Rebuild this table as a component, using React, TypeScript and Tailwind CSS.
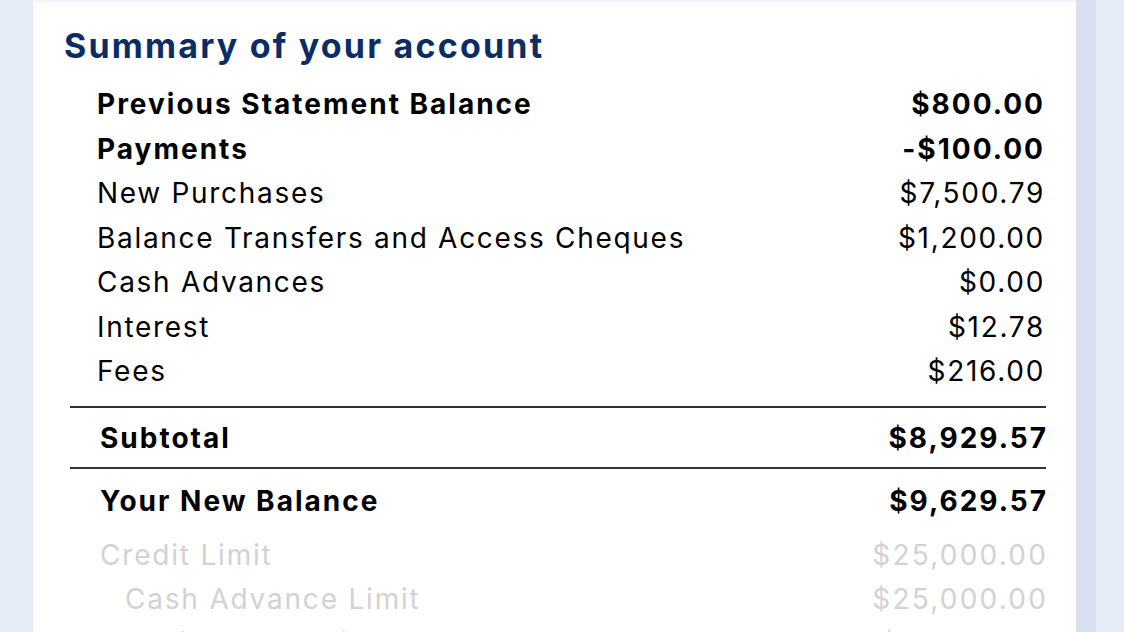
const rows = [
  { label: "Previous Statement Balance", value: "$800.00", bold: true },
  { label: "Payments", value: "-$100.00", bold: true },
  { label: "New Purchases", value: "$7,500.79" },
  { label: "Balance Transfers and Access Cheques", value: "$1,200.00" },
  { label: "Cash Advances", value: "$0.00" },
  { label: "Interest", value: "$12.78" },
  { label: "Fees", value: "$216.00" },
];

export default function App() {
  return (
    <div className="flex h-[632px] w-[1124px] overflow-hidden bg-white font-['Inter',sans-serif]">
      <div className="w-[33px] shrink-0 bg-[#e5ebf7]" />
      <main className="w-[1043px] shrink-0 border-t-2 border-[#f2f3f8] bg-white">
        <h1 className="pl-[31px] pt-[23px] text-[34px] font-bold leading-[41px] tracking-[2.2px] text-[#0a2d66]">
          Summary of your account
        </h1>

        <div className="mt-[16px] pl-[64px] pr-[33px] text-[28px] text-black">
          {rows.map((r) => (
            <div
              key={r.label}
              className={`flex h-[44.5px] items-center justify-between ${
                r.bold ? "font-bold tracking-[2px]" : "font-normal tracking-[1.7px]"
              }`}
            >
              <span>{r.label}</span>
              <span className="-mr-[2px]">{r.value}</span>
            </div>
          ))}
        </div>

        <div className="ml-[37px] mr-[30px] mt-[12.5px] border-t-2 border-[#333]">
          <div className="flex h-[59px] items-center justify-between pl-[30px] text-[28px] font-bold tracking-[2px] text-black">
            <span>Subtotal</span>
            <span className="-mr-[2px]">$8,929.57</span>
          </div>
          <div className="border-t-2 border-[#333]" />
          <div className="flex h-[64px] items-center justify-between pl-[30px] text-[28px] font-bold tracking-[2px] text-black">
            <span>Your New Balance</span>
            <span className="-mr-[2px]">$9,629.57</span>
          </div>
        </div>

        <div className="pl-[67px] pr-[30px] text-[28px] tracking-[1.8px] text-[#d2d2d2]">
          <div className="flex h-[44px] items-center justify-between">
            <span>Credit Limit</span>
            <span className="-mr-[2px] tracking-[2.2px]">$25,000.00</span>
          </div>
          <div className="flex h-[44px] items-center justify-between pl-[25px]">
            <span>Cash Advance Limit</span>
            <span className="-mr-[2px] tracking-[2.2px]">$25,000.00</span>
          </div>
          <div className="flex h-[44px] items-center justify-between pl-[25px]">
            <span>Available Credit</span>
            <span className="-mr-[2px] tracking-[2.2px]">$15,370.43</span>
          </div>
        </div>
      </main>
      <div className="w-[20px] shrink-0 bg-[#d9e0ee]" />
      <div className="w-[28px] shrink-0 bg-[#e5ebf7]" />
    </div>
  );
}
